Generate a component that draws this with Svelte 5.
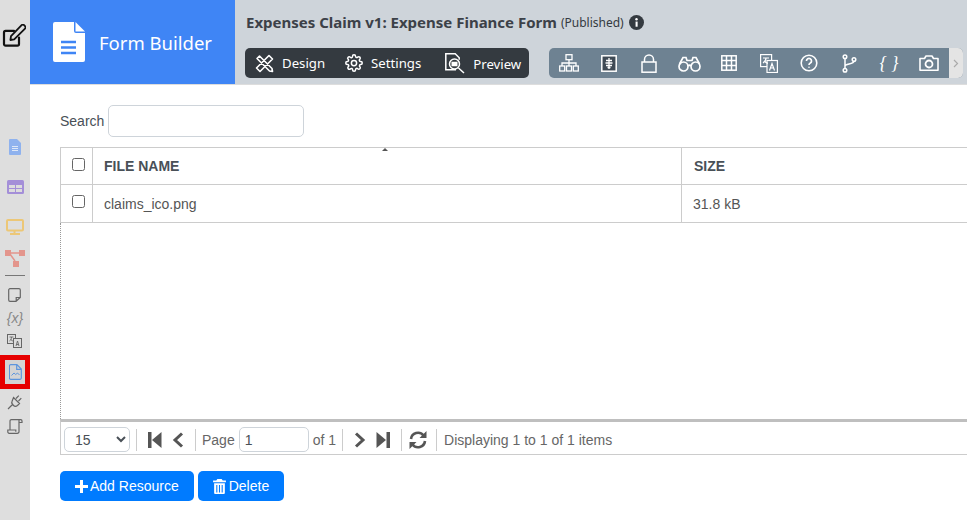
<script>
  const pagerText = "Displaying 1 to 1 of 1 items";
</script>

<div class="app">
  <aside class="sidebar">
    <div class="edit-slot">
      <svg width="24" height="24" viewBox="0 0 24 24" fill="none" stroke="#111" stroke-width="2.200">
        <path d="M17 13.500V20a1.600 1.600 0 0 1-1.600 1.600H3.600A1.600 1.600 0 0 1 2 20V8.400a1.600 1.600 0 0 1 1.600-1.600H12" stroke-linecap="round" />
        <path d="M9 12.200 8.400 16l3.800-.6L23 4.600a1.800 1.800 0 0 0 0-2.500l-.9-.9a1.800 1.800 0 0 0-2.500 0z" stroke-width="1.800" stroke-linejoin="round" />
      </svg>
    </div>
    <div class="colored">
      <svg width="12" height="16" viewBox="0 0 12 16"><path fill="#8fb2ee" d="M0 1a1 1 0 0 1 1-1h7l4 4v11a1 1 0 0 1-1 1H1a1 1 0 0 1-1-1z" /><path stroke="#dfe8f7" d="M3 7.500h6M3 9.500h6M3 11.500h6" /></svg>
      <svg width="17" height="14" viewBox="0 0 17 14"><rect width="17" height="14" rx="1.500" fill="#a48fd8" /><path fill="#ddd" d="M2 5h6v3H2zM9 5h6v3H9zM2 9h6v3H2zM9 9h6v3H9z" /></svg>
      <svg width="18" height="16" viewBox="0 0 18 16"><rect x="1" y="1" width="16" height="10.500" rx="1" fill="none" stroke="#ecc777" stroke-width="2" /><path stroke="#ecc777" stroke-width="2" d="M8.500 12v2M4 15h10" /></svg>
      <svg width="20" height="18" viewBox="0 0 20 18"><path stroke="#e3958c" stroke-width="1.500" d="M5 4h10M5 5l5 7" /><rect width="6" height="6" y="1" fill="#e3958c" /><rect width="6" height="6" x="14" y="1" fill="#e3958c" /><rect width="6" height="6" x="8" y="12" fill="#e3958c" /></svg>
    </div>
    <hr class="side-rule" />
    <div class="side-group gray">
      <svg width="13" height="14" viewBox="0 0 13 14" fill="none" stroke="#666" stroke-width="1.200"><path d="M2 .7h9A1.300 1.300 0 0 1 12.300 2v7.500L8 13.300H2A1.300 1.300 0 0 1 .7 12V2A1.300 1.300 0 0 1 2 .7zM12 9.500H8.200V13" /></svg>
      <span class="fx">{"{x}"}</span>
      <svg width="15" height="14" viewBox="0 0 15 14" fill="none" stroke="#666"><rect x=".5" y=".5" width="8" height="9" fill="#ddd" /><rect x="6.500" y="4.500" width="8" height="9" fill="#ddd" /><path d="M2.500 3h4M4.500 3c0 2-1 3.500-2 4M3.500 5c.6 1.200 1.500 1.700 2.500 2M9 12l1.500-5 1.500 5M9.500 10.500h2" stroke-width=".9" /></svg>
    </div>
    <div class="side-active">
      <div class="active-inner">
        <svg width="13" height="16" viewBox="0 0 13 16" fill="none" stroke="#5d95dd" stroke-width="1.200"><path d="M1.600.7h6.300l4.400 4.400v9a1.200 1.200 0 0 1-1.200 1.200H1.600a1.200 1.200 0 0 1-1.200-1.200V1.900A1.200 1.200 0 0 1 1.600.7zM7.700.9V5.300h4.400" /><path d="M2.500 11.500 5 9l1.700 1.500L8.500 9l2 2" stroke-width="1" /></svg>
      </div>
    </div>
    <div class="side-group gray tail">
      <svg width="16" height="16" viewBox="0 0 16 16" fill="none" stroke="#666" stroke-width="1.200"><path d="M6.500 3.500 12.500 9.500 10.500 11.500c-1.300 1-3 1-4 0S4 9 5 7.500zM5.500 10.500 1 15M9 4.500 11.800 1.700M11.500 7 14.300 4.200" /></svg>
      <svg width="16" height="15" viewBox="0 0 16 15" fill="none" stroke="#666" stroke-width="1.200"><path d="M3 11V2a1.400 1.400 0 0 1 1.400-1.400h9.300A1.400 1.400 0 0 1 15 2v1.500h-3M12 1v11.500a1.700 1.700 0 0 1-1.700 1.800H2A1.500 1.500 0 0 1 .8 12.500V11h8v1.800" /></svg>
    </div>
  </aside>

  <div class="main">
    <header class="topbar">
      <div class="brand">
        <svg width="32" height="40" viewBox="0 0 32 40"><path fill="#fff" d="M0 2a2 2 0 0 1 2-2h19v9a2 2 0 0 0 2 2h9v27a2 2 0 0 1-2 2H2a2 2 0 0 1-2-2z" /><path fill="#fff" d="M22.500 0 32 9.500h-9.500z" /><path stroke="#3f85f5" stroke-width="2.500" d="M8 20h15M8 25.500h15M8 31h15" /></svg>
        <span>Form Builder</span>
      </div>
      <div class="top-right">
        <div class="title-row">
          <span class="title">Expenses Claim v1: Expense Finance Form</span>
          <span class="status">(Published)</span>
          <svg class="info" width="15" height="15" viewBox="0 0 16 16"><circle cx="8" cy="8" r="8" fill="#343a40" /><rect x="7" y="7" width="2.200" height="5.500" fill="#fff" /><circle cx="8" cy="4.500" r="1.300" fill="#fff" /></svg>
        </div>
        <div class="tool-row">
          <div class="mode-bar">
            <span class="mode">
              <svg width="19" height="19" viewBox="0 0 19 19" fill="none" stroke="#fff" stroke-width="1.600"><path d="M2 4.500 4.500 2 17 14.500 17.500 17.500 14.500 17zM14 1.500 17.500 5 5 17.500 1.500 14z" stroke-linejoin="round" /></svg>
              Design
            </span>
            <span class="mode">
              <svg width="18" height="18" viewBox="0 0 24 24" fill="none" stroke="#fff" stroke-width="2"><circle cx="12" cy="12" r="3.500" /><path d="M19.400 15a1.650 1.650 0 0 0 .33 1.820l.06.06a2 2 0 1 1-2.830 2.830l-.06-.06a1.650 1.650 0 0 0-2.820 1.170V21a2 2 0 0 1-4 0v-.09a1.650 1.650 0 0 0-2.820-1.170l-.06.06a2 2 0 1 1-2.830-2.830l.06-.06A1.650 1.650 0 0 0 3.090 14H3a2 2 0 0 1 0-4h.09a1.650 1.650 0 0 0 1.170-2.820l-.06-.06a2 2 0 1 1 2.830-2.830l.06.06A1.650 1.650 0 0 0 10 3.090V3a2 2 0 0 1 4 0v.09a1.650 1.650 0 0 0 2.820 1.170l.06-.06a2 2 0 1 1 2.830 2.830l-.06.06A1.650 1.650 0 0 0 20.910 10H21a2 2 0 0 1 0 4h-.09a1.650 1.650 0 0 0-1.510 1z" /></svg>
              Settings
            </span>
            <span class="mode preview">
              <svg width="21" height="21" viewBox="0 0 21 21" fill="none" stroke="#fff" stroke-width="1.500"><path d="M11 16.800H.8V.8h9.400l4 4v2" /><circle cx="9.500" cy="11" r="5" /><path d="M6.500 9.500h6M6.500 11h6M6.500 12.500h6M13.500 15l5.500 5" /></svg>
              Preview
            </span>
          </div>
          <div class="icon-bar">
            <div class="icons">
              <svg width="20" height="18" viewBox="0 0 20 18" fill="none" stroke="#fff" stroke-width="1.300"><rect x="7" y=".7" width="6" height="5" /><rect x=".7" y="12" width="5" height="5" /><rect x="7.500" y="12" width="5" height="5" /><rect x="14.300" y="12" width="5" height="5" /><path d="M10 5.700V12M3 12V9h14v3" /></svg>
              <svg width="16" height="17" viewBox="0 0 16 17"><rect x=".8" y=".8" width="14.400" height="15.400" fill="#3f4a55" stroke="#fff" stroke-width="1.500" /><path stroke="#fff" stroke-width="1.300" d="M8 3v11M5 5.500h6M4.500 8h7M5 10.500h6M6.500 12.500h3" /></svg>
              <svg width="16" height="19" viewBox="0 0 16 19" fill="none" stroke="#fff" stroke-width="1.500"><rect x="1" y="8" width="14" height="10.200" /><path d="M3.500 8V5.500a4.500 4.500 0 0 1 9 0V8" /></svg>
              <svg width="23" height="17" viewBox="0 0 23 17" fill="none" stroke="#fff" stroke-width="1.700"><circle cx="5.500" cy="11.500" r="4.500" /><circle cx="17.500" cy="11.500" r="4.500" /><path d="M10 11c1-1 2-1 3 0M1.500 9 5 2.500h3l1 3h5l1-3h3L21.500 9" /></svg>
              <svg width="16" height="16" viewBox="0 0 16 16" fill="none" stroke="#fff" stroke-width="1.500"><rect x=".8" y=".8" width="14.400" height="14.400" /><path d="M5.500 1v14M10.500 1v14M1 5.500h14M1 10.500h14" /></svg>
              <svg width="18" height="19" viewBox="0 0 18 19" fill="none" stroke="#fff" stroke-width="1.200"><rect x=".6" y=".6" width="11" height="12" /><rect x="7" y="6.500" width="10.400" height="12" fill="#6e8292" /><path d="M3 4h6M6 4c0 2.500-1.500 4-3 5M4.500 6.500C5 8 6.500 9 8 9.300M9.500 16.500l2.500-7 2.500 7M10.500 14h3" /></svg>
              <svg width="18" height="18" viewBox="0 0 18 18" fill="none" stroke="#fff" stroke-width="1.600"><circle cx="9" cy="9" r="7.800" /><path d="M6.500 7a2.500 2.500 0 1 1 3.800 2.100c-.9.500-1.300 1-1.300 2" stroke-width="1.700" /><circle cx="9" cy="13.300" r=".8" fill="#fff" stroke="none" /></svg>
              <svg width="15" height="19" viewBox="0 0 15 19" fill="none" stroke="#fff" stroke-width="1.500"><circle cx="3" cy="2.800" r="1.800" /><circle cx="3" cy="16.200" r="1.800" /><circle cx="12" cy="5.500" r="1.800" /><path d="M3 4.600v9.800M3 12c0-2.500 9-1.500 9-4.700" /></svg>
              <span class="braces">{"{ }"}</span>
              <svg width="20" height="16" viewBox="0 0 20 16" fill="none" stroke="#fff" stroke-width="1.600"><path d="M1 3.500h4.500L7 1h6l1.500 2.500H19v11.700H1z" stroke-linejoin="round" /><circle cx="10" cy="9" r="3.500" stroke-width="1.800" /></svg>
            </div>
            <div class="scroll-end">
              <svg width="6" height="9" viewBox="0 0 6 9" fill="none" stroke="#aaa" stroke-width="1.200"><path d="m1 1 3.500 3.500L1 8" /></svg>
            </div>
          </div>
        </div>
      </div>
    </header>

    <section class="content">
      <div class="search">
        <label for="q">Search</label>
        <input id="q" type="text" />
      </div>

      <div class="grid">
        <div class="row head">
          <div class="c-check"><span class="check"></span></div>
          <div class="c-name">FILE NAME<i class="sort"></i></div>
          <div class="c-size">SIZE</div>
        </div>
        <div class="row body">
          <div class="c-check"><span class="check"></span></div>
          <div class="c-name">claims_ico.png</div>
          <div class="c-size">31.8 kB</div>
        </div>
        <div class="grid-empty"></div>
        <div class="pager">
          <select>
            <option>15</option>
          </select>
          <span class="sep"></span>
          <svg class="pg" width="14" height="16" viewBox="0 0 14 16"><path fill="#555" d="M0 0h3.500v16H0zM13.500 0v16L4 8z" /></svg>
          <svg class="pg" width="12" height="16" viewBox="0 0 12 16" fill="none" stroke="#555" stroke-width="3"><path d="M10 1.500 3 8l7 6.500" /></svg>
          <span class="sep"></span>
          <span class="txt">Page</span>
          <input class="page-input" value="1" />
          <span class="txt">of 1</span>
          <span class="sep"></span>
          <svg class="pg" width="12" height="16" viewBox="0 0 12 16" fill="none" stroke="#555" stroke-width="3"><path d="m2 1.500 7 6.500-7 6.500" /></svg>
          <svg class="pg" width="14" height="16" viewBox="0 0 14 16"><path fill="#555" d="M14 0h-3.500v16H14zM.5 0v16L10 8z" /></svg>
          <span class="sep"></span>
          <svg class="refresh" width="18" height="18" viewBox="0 0 18 18" fill="none" stroke="#555" stroke-width="2.600"><path d="M2 8a7 7 0 0 1 12.500-3.500M16 10a7 7 0 0 1-12.500 3.500" /><path fill="#555" stroke="none" d="M17.500 0v7h-7zM.5 18v-7h7z" /></svg>
          <span class="sep"></span>
          <span class="txt shown">{pagerText}</span>
        </div>
      </div>

      <div class="actions">
        <button type="button">
          <svg width="13" height="13" viewBox="0 0 13 13"><path fill="#fff" d="M5 0h3v5h5v3H8v5H5V8H0V5h5z" /></svg>
          Add Resource
        </button>
        <button type="button" class="del">
          <svg width="13" height="15" viewBox="0 0 12 14"><path fill="#fff" d="M4 0h4l1 1.500h3V3H0V1.500h3zM1 4h10v9a1 1 0 0 1-1 1H2a1 1 0 0 1-1-1z" /><path stroke="#007bff" d="M3.500 5.500v7M6 5.500v7M8.500 5.500v7" /></svg>
          Delete
        </button>
      </div>
    </section>
  </div>
</div>

<style>
  :global(body) {
    margin: 0;
    background: #fff;
    overflow: hidden;
  }
  .app {
    display: flex;
    width: 967px;
    height: 520px;
    overflow: hidden;
    font-family: "Liberation Sans", Arial, sans-serif;
    color: #495057;
  }
  .sidebar {
    width: 30px;
    flex: none;
    background: #dedede;
    display: flex;
    flex-direction: column;
    align-items: center;
  }
  .edit-slot {
    height: 24px;
    margin: 24px 2px 0 0;
  }
  .side-group {
    display: flex;
    flex-direction: column;
    align-items: center;
  }
  .colored {
    margin-top: 91px;
    display: grid;
    justify-items: center;
  }
  .colored svg:nth-child(2) {
    margin-top: 25px;
  }
  .colored svg:nth-child(3) {
    margin-top: 25px;
  }
  .colored svg:nth-child(4) {
    margin-top: 14px;
  }
  .side-rule {
    width: 20px;
    margin: 8px 0 0;
    border: 0;
    border-top: 1px solid #777;
  }
  .gray {
    margin-top: 12px;
    gap: 9px;
  }
  .fx {
    font: italic 14px "Liberation Sans", sans-serif;
    color: #888;
    line-height: 14px;
  }
  .side-active {
    width: 30px;
    height: 34px;
    margin-top: 7px;
    box-sizing: border-box;
    border: 5px solid #e60000;
    display: flex;
    align-items: center;
    justify-content: center;
  }
  .active-inner {
    width: 20px;
    height: 24px;
    background: #d4d4d4;
    display: flex;
    align-items: center;
    justify-content: center;
  }
  .gray.tail {
    margin-top: 5px;
    gap: 9px;
  }
  .main {
    flex: 1;
    min-width: 0;
    display: flex;
    flex-direction: column;
  }
  .topbar {
    height: 84px;
    flex: none;
    display: flex;
    background: #ced4da;
    border-bottom: 1px solid #ddd;
  }
  .brand {
    width: 205px;
    flex: none;
    box-sizing: border-box;
    padding-left: 23px;
    background: #3f85f5;
    display: flex;
    align-items: center;
    gap: 14px;
    color: #fff;
    font: 18.500px "Noto Sans", sans-serif;
  }
  .top-right {
    flex: 1;
    min-width: 0;
    padding-left: 11px;
  }
  .title-row {
    display: flex;
    align-items: center;
    height: 20px;
    margin-top: 12px;
    gap: 4px;
    color: #343a40;
    font-family: "Noto Sans", sans-serif;
  }
  .title {
    font-size: 15px;
    font-weight: 700;
    color: #3c4148;
  }
  .status {
    font-size: 12px;
    color: #343a40;
  }
  .info {
    margin-left: 1px;
  }
  .tool-row {
    display: flex;
    margin: 16px 0 0 -1px;
    gap: 20px;
  }
  .mode-bar {
    width: 284px;
    height: 30px;
    box-sizing: border-box;
    background: #343a40;
    border-radius: 5px;
    display: flex;
    align-items: center;
    padding-left: 10px;
    color: #fff;
    font: 13.200px "Noto Sans", sans-serif;
    gap: 20px;
  }
  .mode {
    display: flex;
    align-items: center;
    gap: 8px;
  }
  .mode.preview {
    margin-left: 4px;
    gap: 7px;
    padding-top: 1px;
  }
  .icon-bar {
    width: 414px;
    height: 30px;
    flex: none;
    display: flex;
    background: #6e8292;
    border-radius: 5px;
    overflow: hidden;
  }
  .icons {
    width: 400px;
    display: grid;
    grid-template-columns: repeat(10, 40px);
    justify-items: center;
    align-items: center;
  }
  .braces {
    color: #fff;
    font: italic 18px "Liberation Serif", serif;
    white-space: nowrap;
  }
  .scroll-end {
    flex: 1;
    background: #e4e4e4;
    display: flex;
    align-items: center;
    justify-content: center;
  }
  .content {
    flex: 1;
    padding: 20px 0 0 30px;
  }
  .search {
    display: flex;
    align-items: center;
    gap: 4px;
    font-size: 14px;
    color: #495057;
  }
  .search input {
    width: 196px;
    height: 32px;
    box-sizing: border-box;
    border: 1px solid #ced4da;
    border-radius: 5px;
    background: #fff;
  }
  .grid {
    margin-top: 10px;
    border-top: 1px solid #ccc;
    border-bottom: 1px solid #ccc;
    width: 920px;
  }
  .row {
    display: flex;
    font-size: 14px;
    border-bottom: 1px solid #ccc;
    border-left: 1px solid #ccc;
  }
  .row > div {
    display: flex;
    align-items: center;
    box-sizing: border-box;
  }
  .head {
    height: 36px;
    font-weight: 700;
    color: #495057;
  }
  .body {
    height: 37px;
    color: #555;
  }
  .c-check {
    width: 32px;
    padding: 0 0 4px 11px;
    border-right: 1px solid #ccc;
  }
  .c-name {
    width: 589px;
    padding-left: 11px;
    border-right: 1px solid #ccc;
    position: relative;
  }
  .c-size {
    flex: 1;
    padding-left: 12px;
  }
  .body .c-size {
    padding-left: 11px;
  }
  .check {
    width: 13px;
    height: 13px;
    box-sizing: border-box;
    border: 1px solid #666;
    border-radius: 2.500px;
    background: #fff;
  }
  .sort {
    position: absolute;
    top: 0;
    left: 289px;
    width: 0;
    height: 0;
    border-left: 3.500px solid transparent;
    border-right: 3.500px solid transparent;
    border-bottom: 3px solid #555;
  }
  .grid-empty {
    height: 196px;
    border-left: 1px dotted #999;
  }
  .pager {
    height: 35px;
    box-sizing: border-box;
    border-top: 3px solid #bfbfbf;
    border-left: 1px solid #ccc;
    display: flex;
    align-items: center;
    padding: 3px 0 0 3px;
    font-size: 14px;
    color: #666;
  }
  .pager select {
    width: 66px;
    height: 25px;
    box-sizing: border-box;
    padding-left: 6px;
    border: 1px solid #ced4da;
    border-radius: 5px;
    background: #fff;
    color: #495057;
    font: 14px "Liberation Sans", sans-serif;
  }
  .sep {
    width: 1px;
    height: 22px;
    background: #ccc;
    margin: 0 6px;
  }
  .pg {
    margin: 0 5px;
  }
  .refresh {
    margin: 0 3px 0 1px;
  }
  .shown {
    margin-left: 1px;
  }
  .page-input {
    width: 70px;
    height: 25px;
    box-sizing: border-box;
    margin: 0 4px;
    padding: 0 5px;
    border: 1px solid #ced4da;
    border-radius: 5px;
    color: #495057;
    font: 14px "Liberation Sans", sans-serif;
  }
  .actions {
    margin-top: 16px;
    display: flex;
    gap: 4px;
  }
  .actions button {
    height: 30px;
    padding: 0 15px;
    display: flex;
    align-items: center;
    gap: 2px;
    border: 0;
    border-radius: 5px;
    background: #007bff;
    color: #fff;
    font: 14px "Liberation Sans", sans-serif;
  }
  .actions button.del {
    gap: 3px;
  }
</style>
